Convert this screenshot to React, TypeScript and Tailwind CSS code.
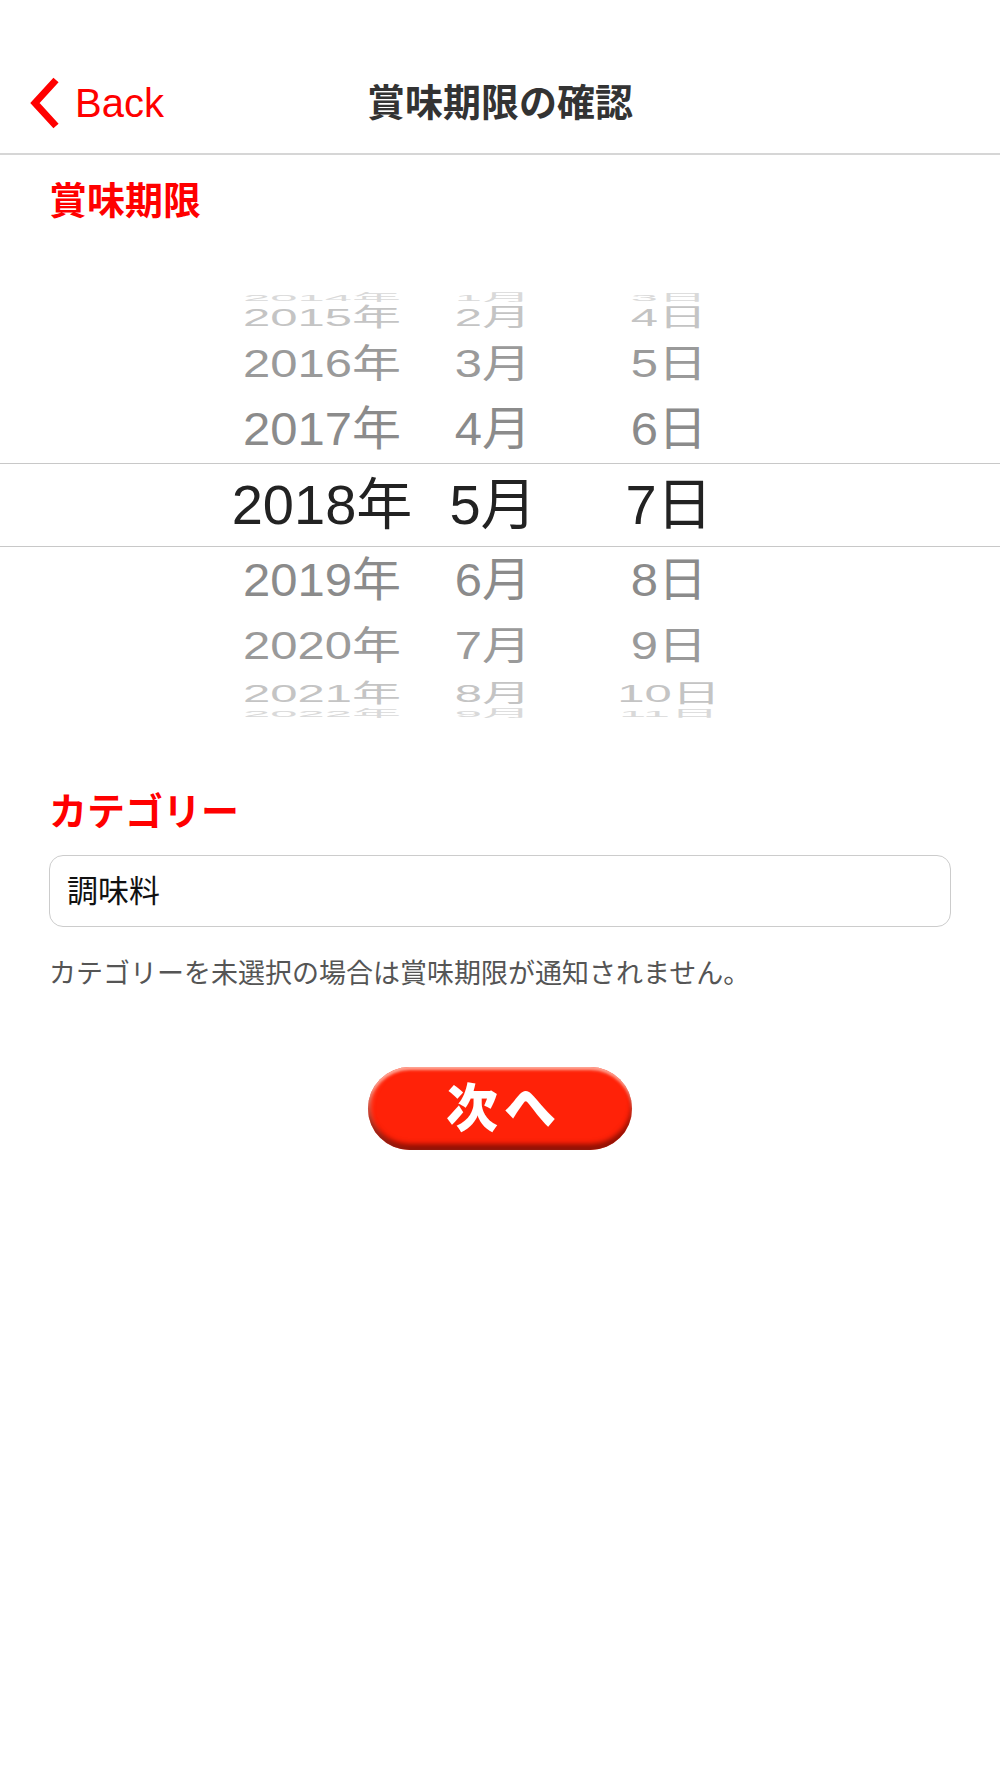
import React from "react";

type Row = {
  year: string;
  month: string;
  day: string;
  box: string;
  text: string;
};

const rows: Row[] = [
  { year: "2014年", month: "1月", day: "3日", box: "h-[10px]", text: "text-[49px] text-[#d9d9d9] scale-y-[0.2]" },
  { year: "2015年", month: "2月", day: "4日", box: "h-[30px]", text: "text-[49px] text-[#c4c4c4] scale-y-[0.5]" },
  { year: "2016年", month: "3月", day: "5日", box: "h-[64px]", text: "text-[49px] text-[#9a9a9a] scale-y-[0.78]" },
  { year: "2017年", month: "4月", day: "6日", box: "h-[67px]", text: "text-[49px] text-[#8b8b8b] scale-y-[0.94]" },
  { year: "2018年", month: "5月", day: "7日", box: "h-[84px] border-y-[1.5px] border-[#c8c8c8]", text: "text-[56px] text-[#222222]" },
  { year: "2019年", month: "6月", day: "8日", box: "h-[67px]", text: "text-[49px] text-[#8b8b8b] scale-y-[0.94]" },
  { year: "2020年", month: "7月", day: "9日", box: "h-[64px]", text: "text-[49px] text-[#9a9a9a] scale-y-[0.78]" },
  { year: "2021年", month: "8月", day: "10日", box: "h-[30px]", text: "text-[49px] text-[#c4c4c4] scale-y-[0.5]" },
  { year: "2022年", month: "9月", day: "11日", box: "h-[10px]", text: "text-[49px] text-[#d9d9d9] scale-y-[0.2]" },
];

function PickerRow({ row }: { row: Row }) {
  return (
    <div className={`flex items-center ${row.box}`}>
      <div className={`flex w-full leading-none ${row.text}`}>
        <span className="ml-[230px] w-[184px] text-center">{row.year}</span>
        <span className="w-[158px] text-center">{row.month}</span>
        <span className="w-[194px] text-center">{row.day}</span>
      </div>
    </div>
  );
}

export default function App() {
  return (
    <div
      className="min-h-screen w-[1000px] bg-white"
      style={{ fontFamily: '"Liberation Sans", "Noto Sans CJK JP", sans-serif' }}
    >
      {/* nav bar */}
      <header className="pt-[53px] border-b-2 border-[#d6d6d6]">
        <div className="grid h-[100px] grid-cols-[1fr_auto_1fr] items-center">
          <button className="flex items-center gap-[14px] pl-[27px] text-[#ff0000]">
            <svg width="34" height="52" viewBox="0 0 34 52" fill="none">
              <path d="M29 3 L8 26 L29 49" stroke="#ff0000" strokeWidth="7" strokeLinejoin="miter" />
            </svg>
            <span className="text-[40px] leading-none">Back</span>
          </button>
          <h1 className="text-[38px] font-bold leading-none text-[#333333]">賞味期限の確認</h1>
          <div />
        </div>
      </header>

      {/* expiry date */}
      <section className="pt-[27px]">
        <h2 className="pl-[49px] text-[38px] font-bold leading-none text-[#ff0000]">賞味期限</h2>
        <div className="mt-[72px] h-[426px] overflow-hidden">
          {rows.map((r) => (
            <PickerRow key={r.year} row={r} />
          ))}
        </div>
      </section>

      {/* category */}
      <section className="px-[49px] pt-[75px]">
        <h2 className="text-[38px] font-bold leading-none text-[#ff0000]">カテゴリー</h2>
        <div className="mt-[24px] flex h-[72px] items-center rounded-[14px] border-[1.5px] border-[#cccccc] pl-[17px]">
          <span className="text-[31px] leading-none text-[#111111]">調味料</span>
        </div>
        <p className="mt-[34px] text-[27px] leading-none text-[#555555]">
          カテゴリーを未選択の場合は賞味期限が通知されません。
        </p>
      </section>

      <div className="mt-[79px] flex justify-center">
        <button className="flex h-[83px] w-[264px] items-center justify-center rounded-full bg-[#ff2208] shadow-[inset_0_-6px_5px_rgba(110,10,0,0.75),inset_0_3px_3px_rgba(255,190,175,0.8),inset_3px_0_4px_rgba(255,170,150,0.5)]">
          <span className="pl-[8px] text-[52px] font-black leading-none tracking-[6px] text-white">次へ</span>
        </button>
      </div>
    </div>
  );
}
